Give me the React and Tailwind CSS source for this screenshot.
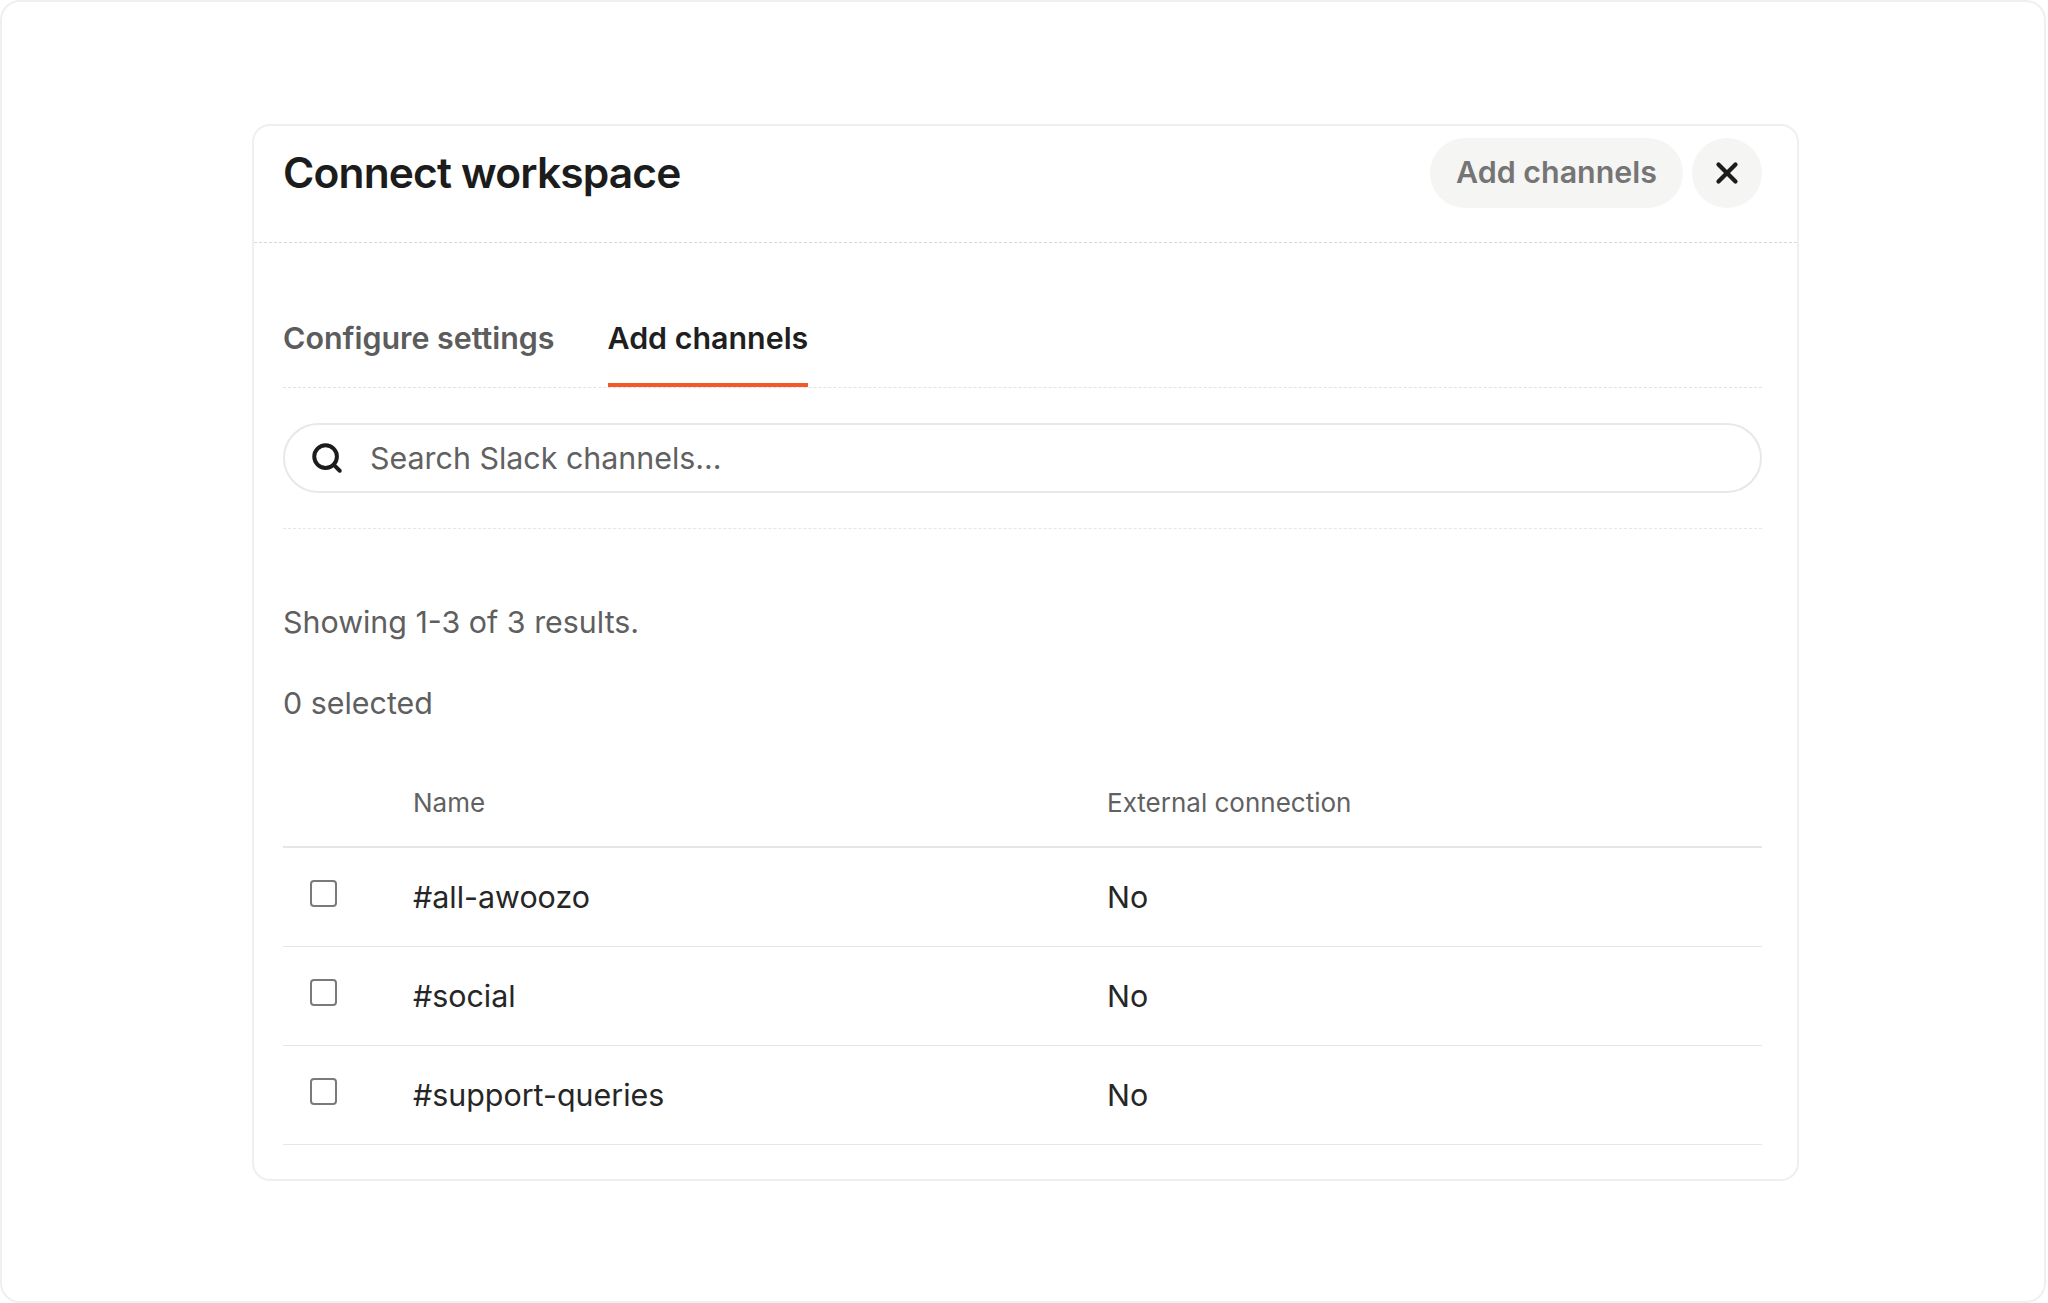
import React from "react";
import { Search, X } from "lucide-react";

const channels = ["#all-awoozo", "#social", "#support-queries"];

const Row = ({ name }) => (
  <div className="grid grid-cols-[130px_694px_1fr] items-center h-[99px] border-b border-[#e6e6e6] text-[30.4px] text-[#262626]">
    <div className="pl-[27px] pb-[8px]">
      <div className="w-[27px] h-[27px] rounded-[4px] border-2 border-[#7a7a7a] bg-white"></div>
    </div>
    <div className="pt-[1px]">{name}</div>
    <div className="pt-[1px]">No</div>
  </div>
);

const App = () => {
  return (
    <div className="h-[1303px] w-[2046px] rounded-[20px] border-2 border-[#edf0f3] bg-white pl-[250px] pt-[122px] font-['Inter',sans-serif]">
      <div className="w-[1547px] h-[1057px] rounded-[18px] border-2 border-[#edf0f3]">
        {/* header */}
        <div className="flex items-center justify-between h-[117px] pl-[29px] pr-[35px] pb-[22px] border-b border-dashed border-[#d8d8d8]">
          <h1 className="text-[42.5px] font-semibold tracking-[-0.02em] text-[#1c1c1c]">Connect workspace</h1>
          <div className="flex items-center gap-[9px]">
            <button className="h-[70px] w-[253px] rounded-full bg-[#f5f5f4] text-[30.4px] font-semibold text-[#757575]">
              Add channels
            </button>
            <button className="flex items-center justify-center w-[70px] h-[70px] rounded-full bg-[#f5f5f4] text-[#1c1c1c]">
              <X size={34} strokeWidth={3} />
            </button>
          </div>
        </div>

        <div className="pl-[29px] pr-[35px]">
          {/* tabs */}
          <div className="flex gap-[53px] h-[145px] items-end border-b border-dashed border-[#e2e2e2] text-[30.4px] font-semibold">
            <div className="h-[71px] text-[#5c5c5c]">Configure settings</div>
            <div className="h-[71px] border-b-[4px] border-[#f4572a] text-[#1f1f1f]">Add channels</div>
          </div>

          {/* search */}
          <div className="py-[35px] border-b border-dashed border-[#e6e6e6]">
            <div className="flex items-center h-[70px] rounded-full border-2 border-[#e8e8e8] pl-[25px] text-[30.4px] text-[#616161]">
              <Search size={34} strokeWidth={2.8} className="text-[#1c1c1c]" />
              <span className="ml-[26px] pt-[2px]">Search Slack channels...</span>
            </div>
          </div>

          <p className="mt-[73px] text-[30.4px] leading-[40px] text-[#5f5f5f]">Showing 1-3 of 3 results.</p>
          <p className="mt-[41px] text-[30.4px] leading-[40px] text-[#5f5f5f]">0 selected</p>

          {/* table */}
          <div className="mt-[40px]">
            <div className="grid grid-cols-[130px_694px_1fr] items-center h-[85px] pb-[5px] border-b-2 border-[#e6e6e6] text-[26px] text-[#616161]">
              <div></div>
              <div>Name</div>
              <div>External connection</div>
            </div>
            {channels.map((name) => (
              <Row key={name} name={name} />
            ))}
          </div>
        </div>
      </div>
    </div>
  );
};

export default App;
